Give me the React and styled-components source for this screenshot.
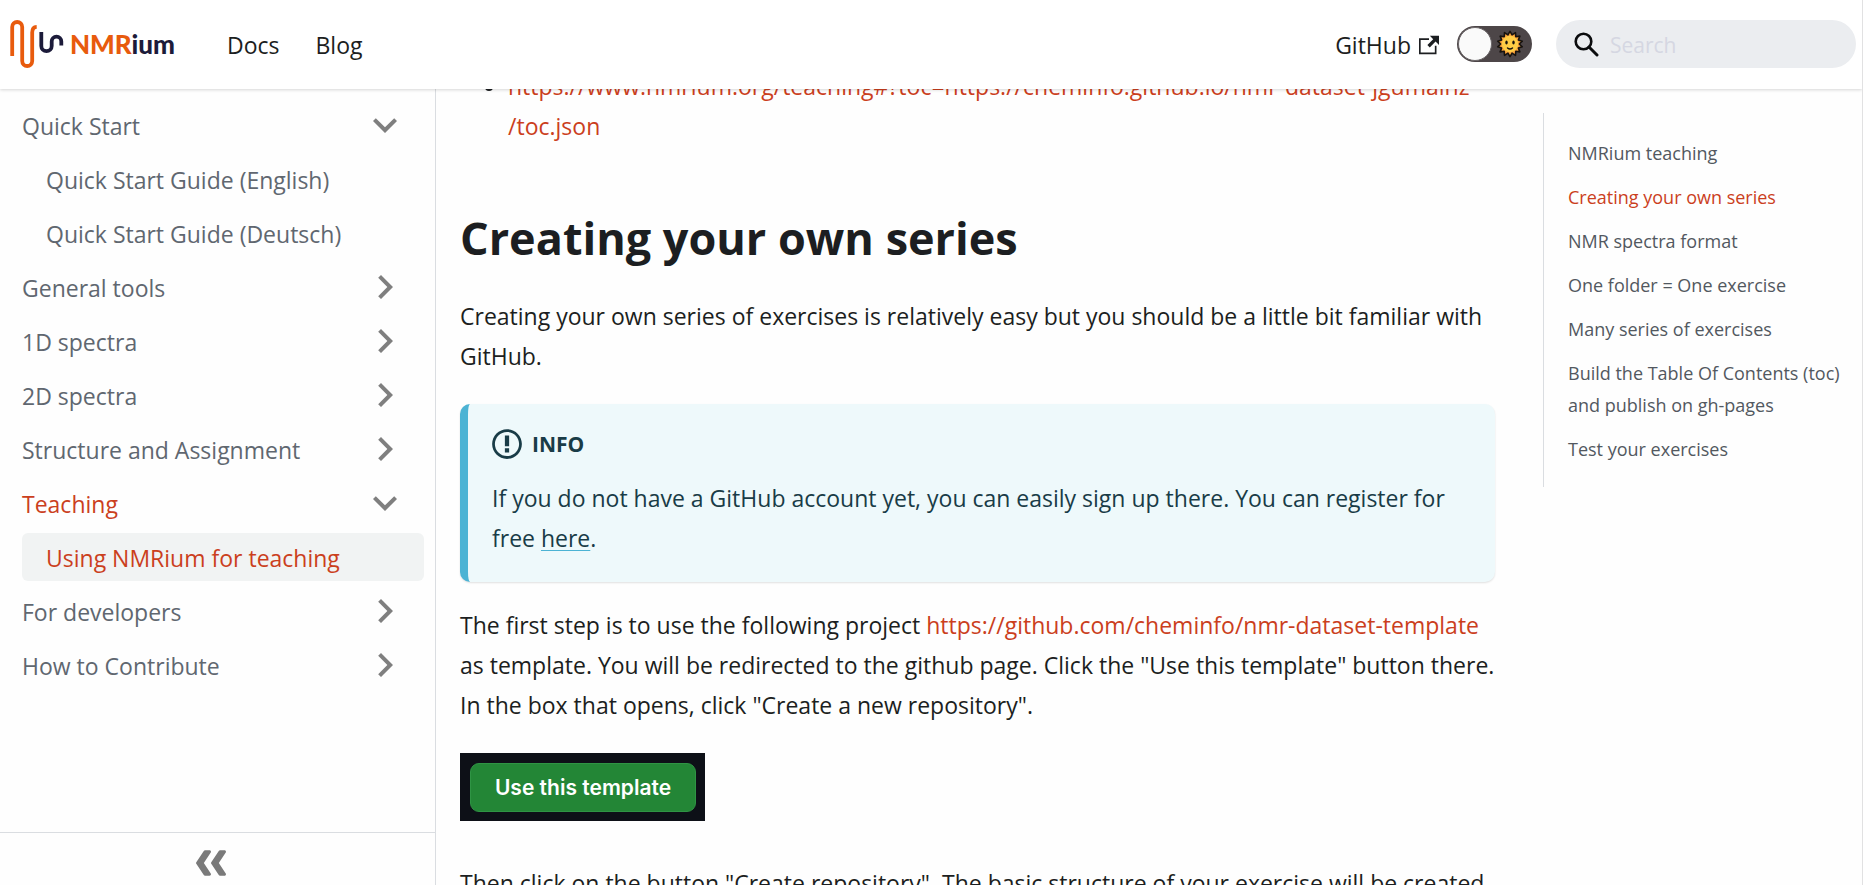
import React from "react";
import styled, { createGlobalStyle, css } from "styled-components";

const colors = {
  text: "#1c1e21",
  muted: "#606770",
  toc: "#525860",
  primary: "#cb3f1d",
  line: "#dadde1",
  info: "#4cb3d4",
  infoBg: "#eef9fb",
  infoText: "#193c47",
  caret: "#7f7f7f",
};

const sans = `"Open Sans", "Noto Sans", sans-serif`;

const GlobalStyle = createGlobalStyle`
  *, *::before, *::after { box-sizing: border-box; }
  body {
    margin: 0;
    background: #fefefe;
    color: ${colors.text};
    font: 23px/40px ${sans};
  }
  a { color: ${colors.primary}; text-decoration: none; }
  ul { list-style: none; margin: 0; padding: 0; }
  button { font: inherit; border: 0; background: none; cursor: pointer; }
`;

const Page = styled.div`
  display: flex;
  flex-direction: column;
  height: 100vh;
  overflow: hidden;
  border-right: 1px solid #e1e1e2;
`;

const Navbar = styled.header`
  position: relative;
  z-index: 2;
  flex: none;
  display: flex;
  align-items: center;
  justify-content: space-between;
  height: 89px;
  padding: 0 6px 1px 8px;
  background: #fff;
  box-shadow: 0 1px 3px rgba(0, 0, 0, 0.16);
`;

const NavGroup = styled.nav`
  display: flex;
  align-items: center;
`;

const Brand = styled.a`
  display: flex;
  align-items: center;
  gap: 5px;
  margin-right: 34px;
  color: #1c1b3a;
  font: 900 26px/48px Lato, sans-serif;

  em {
    color: #e85b0d;
    font-style: normal;
  }
`;

const NavLink = styled.a`
  display: flex;
  align-items: center;
  gap: 8px;
  padding: 2px 18px 0;
  color: ${colors.text};
`;

const ToggleLabel = styled.label`
  position: relative;
  display: flex;
  align-items: center;
  justify-content: flex-end;
  width: 75px;
  height: 36px;
  padding-right: 8px;
  border-radius: 18px;
  background: #4d4648;
  cursor: pointer;
`;

const ToggleInput = styled.input`
  position: absolute;
  inset: 0;
  margin: 0;
  appearance: none;
  cursor: pointer;

  &::before {
    content: "";
    position: absolute;
    top: 1px;
    left: 1px;
    width: 34px;
    height: 34px;
    border: 1px solid #6b6668;
    border-radius: 50%;
    background: #fafafa;
  }

  &:checked::before {
    left: 40px;
  }
`;

const SearchBox = styled.label`
  display: flex;
  align-items: center;
  gap: 11px;
  width: 300px;
  height: 48px;
  margin-left: 24px;
  padding: 0 18px;
  border-radius: 24px;
  background: #ebedf0;

  input {
    min-width: 0;
    flex: 1;
    padding: 2px 0 0;
    border: 0;
    outline: 0;
    background: none;
    color: ${colors.text};
    font: 21px/24px ${sans};
  }

  input::placeholder {
    color: #d5d7e2;
    opacity: 1;
  }
`;

const Body = styled.div`
  display: flex;
  flex: 1;
  min-height: 0;
`;

const Sidebar = styled.aside`
  display: flex;
  flex-direction: column;
  flex: none;
  width: 436px;
  border-right: 1px solid ${colors.line};
`;

const Menu = styled.ul`
  display: flex;
  flex-direction: column;
  flex: 1;
  gap: 6px;
  min-height: 0;
  padding: 12px 11px 12px 22px;
`;

const SubMenu = styled.ul`
  display: flex;
  flex-direction: column;
  gap: 6px;
  margin-top: 6px;
`;

const rowStyle = css`
  display: flex;
  align-items: center;
  width: 100%;
  height: 48px;
  border-radius: 6px;
  color: ${(p) => (p.$active ? colors.primary : colors.muted)};
`;

const Category = styled.button`
  ${rowStyle}
  justify-content: space-between;
  padding: 2px 15px 0 0;
`;

const MenuLink = styled.a`
  ${rowStyle}
  padding: 2px 24px 0;
  background: ${(p) => (p.$active ? "#f1f3f3" : "none")};
`;

const CaretSvg = styled.svg`
  width: 48px;
  height: 48px;
  margin-top: -2px;
  fill: ${colors.caret};
  transform: rotate(${(p) => (p.$open ? 180 : 90)}deg);
`;

const Collapse = styled.button`
  display: flex;
  justify-content: center;
  flex: none;
  height: 53px;
  padding: 15px 14px 0 0;
  border-top: 1px solid ${colors.line};

  svg {
    transform: rotate(180deg);
  }
`;

const Main = styled.main`
  display: grid;
  grid-template-columns: minmax(0, 1fr) 319px;
  gap: 48px;
  flex: 1;
  min-width: 0;
  padding-left: 24px;
`;

/* The article is scrolled part of a line below the navbar. */
const Article = styled.article`
  margin-top: -23px;
`;

const BulletList = styled.ul`
  margin-bottom: 30px;
  padding-left: 48px;
  list-style: disc;
`;

const Heading = styled.h2`
  margin: 0 0 28px;
  padding-top: 32px;
  font-size: 45px;
  font-weight: 700;
  line-height: 60px;
`;

const Paragraph = styled.p`
  margin: 0 0 28px;
`;

const Admonition = styled.section`
  margin-bottom: 23px;
  padding: 24px;
  border-left: 8px solid ${colors.info};
  border-radius: 10px;
  background: ${colors.infoBg};
  box-shadow: 0 1px 2px rgba(0, 0, 0, 0.12);
  color: ${colors.infoText};

  p {
    margin: 18px 0 0;
  }

  p a {
    color: inherit;
    text-decoration: underline;
    text-decoration-color: ${colors.info};
    text-decoration-thickness: 1px;
    text-underline-offset: 3px;
  }
`;

const AdmonitionTitle = styled.h3`
  display: flex;
  align-items: center;
  gap: 10px;
  height: 32px;
  margin: 0;
  font-size: 21px;
  font-weight: 700;
  line-height: 32px;
`;

const TemplateShot = styled.div`
  display: flex;
  width: 245px;
  height: 68px;
  margin: 28px 0 42px;
  padding: 10px 9px 9px 10px;
  background: #0d1017;

  button {
    flex: 1;
    padding: 0;
    border: 1px solid #2f9444;
    border-radius: 9px;
    background: #238636;
    color: #fff;
    font: 600 21px/24px Inter, sans-serif;
  }
`;

const Toc = styled.nav`
  align-self: start;
  margin-top: 24px;
  padding: 24px 14px 22px 24px;
  border-left: 1px solid ${colors.line};
  font-size: 18px;
  line-height: 32px;

  ul {
    display: flex;
    flex-direction: column;
    gap: 12px;
  }
`;

const TocLink = styled.a`
  display: block;
  color: ${(p) => (p.$active ? colors.primary : colors.toc)};
`;

function Logo() {
  return (
    <svg width="57" height="50" viewBox="8 19 57 50" fill="none" strokeWidth="3.8" aria-hidden="true">
      <path stroke="#e85b0d" d="M12.2 56V27a5 5 0 0 1 10 0V61a5 5 0 0 0 10 0V32.500q0-5.500 4.500-5.700" />
      <path stroke="#1c1b3a" d="M41.300 32V46a5.200 5.200 0 0 0 10.400 0V41.400a4.800 4.800 0 0 1 9.600 0V45.500" />
    </svg>
  );
}

function ExternalIcon() {
  return (
    <svg width="20" height="20" viewBox="0 0 24 24" aria-hidden="true">
      <path
        fill="currentColor"
        d="M21 13v10h-21v-19h12v2h-10v15h17v-8h2zm3-12h-10.988l4.035 4-6.977 7.07 2.828 2.828 6.977-7.07 4.125 4.172v-11z"
      />
    </svg>
  );
}

function SunIcon() {
  const points = Array.from({ length: 28 }, (_, i) => {
    const r = i % 2 ? 9.3 : 12.6;
    const a = (i * Math.PI) / 14;
    return `${(14 + r * Math.sin(a)).toFixed(2)},${(14 - r * Math.cos(a)).toFixed(2)}`;
  }).join(" ");
  return (
    <svg width="28" height="28" viewBox="0 0 28 28" aria-hidden="true">
      <polygon points={points} fill="#f7a13b" stroke="#17130f" strokeWidth="1.6" strokeLinejoin="round" />
      <circle cx="14" cy="14" r="8.200" fill="#ffcd45" />
      <ellipse cx="10.500" cy="12.500" rx="1.200" ry="1.900" fill="#17130f" />
      <ellipse cx="17.500" cy="12.500" rx="1.200" ry="1.900" fill="#17130f" />
      <path d="M11.500 18q2.500 2 5 0" fill="none" stroke="#17130f" strokeWidth="1.4" strokeLinecap="round" />
    </svg>
  );
}

function SearchIcon() {
  return (
    <svg width="25" height="25" viewBox="0 0 25 25" fill="none" stroke="#0b0c0e" strokeWidth="2.6" aria-hidden="true">
      <circle cx="9.500" cy="9.500" r="7.800" />
      <path d="M15 15L23 23" strokeWidth="3" strokeLinecap="round" />
    </svg>
  );
}

function Caret({ open }) {
  return (
    <CaretSvg $open={open} viewBox="0 0 24 24" aria-hidden="true">
      <path d="M7.410 15.410L12 10.830l4.590 4.580L18 14l-6-6-6 6z" />
    </CaretSvg>
  );
}

function CollapseIcon() {
  return (
    <svg width="30" height="30" viewBox="0 0 20 20" fill="#7a7a7a" aria-hidden="true">
      <path d="M9.992 10.023c0 .2-.062.399-.172.547l-4.996 7.492a.982.982 0 01-.828.454H1c-.55 0-1-.453-1-1 0-.2.059-.403.168-.551l4.629-6.942L.168 3.078A.939.939 0 010 2.528c0-.548.45-.997 1-.997h2.996c.352 0 .649.18.828.45L9.82 9.472c.11.148.172.347.172.55zm0 0" />
      <path d="M19.980 10.023c0 .2-.058.399-.168.547l-4.996 7.492a.987.987 0 01-.828.454h-3c-.547 0-.996-.453-.996-1 0-.2.059-.403.168-.551l4.625-6.942-4.625-6.945a.939.939 0 01-.168-.55 1 1 0 01.996-.997h3c.348 0 .649.18.828.45l4.996 7.492c.11.148.168.347.168.55zm0 0" />
    </svg>
  );
}

function InfoIcon() {
  return (
    <svg width="30" height="34" viewBox="0 0 14 16" fill="currentColor" aria-hidden="true">
      <path
        fillRule="evenodd"
        d="M7 2.300c3.140 0 5.700 2.560 5.700 5.700s-2.560 5.700-5.700 5.700A5.710 5.710 0 0 1 1.300 8c0-3.140 2.560-5.700 5.700-5.700zM7 1C3.140 1 0 4.140 0 8s3.140 7 7 7 7-3.140 7-7-3.140-7-7-7zm1 3H6v5h2V4zm0 6H6v2h2v-2z"
      />
    </svg>
  );
}

const menu = [
  { label: "Quick Start", open: true, items: ["Quick Start Guide (English)", "Quick Start Guide (Deutsch)"] },
  { label: "General tools" },
  { label: "1D spectra" },
  { label: "2D spectra" },
  { label: "Structure and Assignment" },
  { label: "Teaching", open: true, active: true, items: ["Using NMRium for teaching"] },
  { label: "For developers" },
  { label: "How to Contribute" },
];

const toc = [
  "NMRium teaching",
  "Creating your own series",
  "NMR spectra format",
  "One folder = One exercise",
  "Many series of exercises",
  "Build the Table Of Contents (toc) and publish on gh-pages",
  "Test your exercises",
];

export default function App() {
  return (
    <Page>
      <GlobalStyle />
      <Navbar>
        <NavGroup>
          <Brand href="#home">
            <Logo />
            <span>
              <em>NMR</em>ium
            </span>
          </Brand>
          <NavLink href="#docs">Docs</NavLink>
          <NavLink href="#blog">Blog</NavLink>
        </NavGroup>
        <NavGroup>
          <NavLink href="https://github.com/cheminfo/nmrium">
            GitHub
            <ExternalIcon />
          </NavLink>
          <ToggleLabel>
            <ToggleInput type="checkbox" role="switch" aria-label="Dark mode" />
            <SunIcon />
          </ToggleLabel>
          <SearchBox>
            <SearchIcon />
            <input type="search" placeholder="Search" aria-label="Search" />
          </SearchBox>
        </NavGroup>
      </Navbar>
      <Body>
        <Sidebar>
          <Menu>
            {menu.map(({ label, open, active, items }) => (
              <li key={label}>
                <Category $active={active} aria-expanded={!!open}>
                  {label}
                  <Caret open={open} />
                </Category>
                {items && (
                  <SubMenu>
                    {items.map((item) => (
                      <li key={item}>
                        <MenuLink href="#doc" $active={active}>
                          {item}
                        </MenuLink>
                      </li>
                    ))}
                  </SubMenu>
                )}
              </li>
            ))}
          </Menu>
          <Collapse aria-label="Collapse sidebar">
            <CollapseIcon />
          </Collapse>
        </Sidebar>
        <Main>
          <Article>
            <BulletList>
              <li>
                <a href="https://www.nmrium.org/teaching">
                  https://www.nmrium.org/teaching#?toc=https://cheminfo.github.io/nmr-dataset-jgumainz
                  <wbr />
                  /toc.json
                </a>
              </li>
            </BulletList>
            <Heading>Creating your own series</Heading>
            <Paragraph>
              Creating your own series of exercises is relatively easy but you should be a little bit familiar with
              GitHub.
            </Paragraph>
            <Admonition>
              <AdmonitionTitle>
                <InfoIcon />
                INFO
              </AdmonitionTitle>
              <p>
                If you do not have a GitHub account yet, you can easily sign up there. You can register for
                <br />
                free <a href="https://github.com/signup">here</a>.
              </p>
            </Admonition>
            <Paragraph>
              The first step is to use the following project{" "}
              <a href="https://github.com/cheminfo/nmr-dataset-template">
                https://github.com/cheminfo/nmr-dataset-template
              </a>
              <br />
              as template. You will be redirected to the github page. Click the "Use this template" button there.
              <br />
              In the box that opens, click "Create a new repository".
            </Paragraph>
            <TemplateShot>
              <button>Use this template</button>
            </TemplateShot>
            <Paragraph>
              Then click on the button "Create repository". The basic structure of your exercise will be created
            </Paragraph>
          </Article>
          <Toc aria-label="On this page">
            <ul>
              {toc.map((item, i) => (
                <li key={item}>
                  <TocLink href="#section" $active={i === 1}>
                    {item}
                  </TocLink>
                </li>
              ))}
            </ul>
          </Toc>
        </Main>
      </Body>
    </Page>
  );
}
